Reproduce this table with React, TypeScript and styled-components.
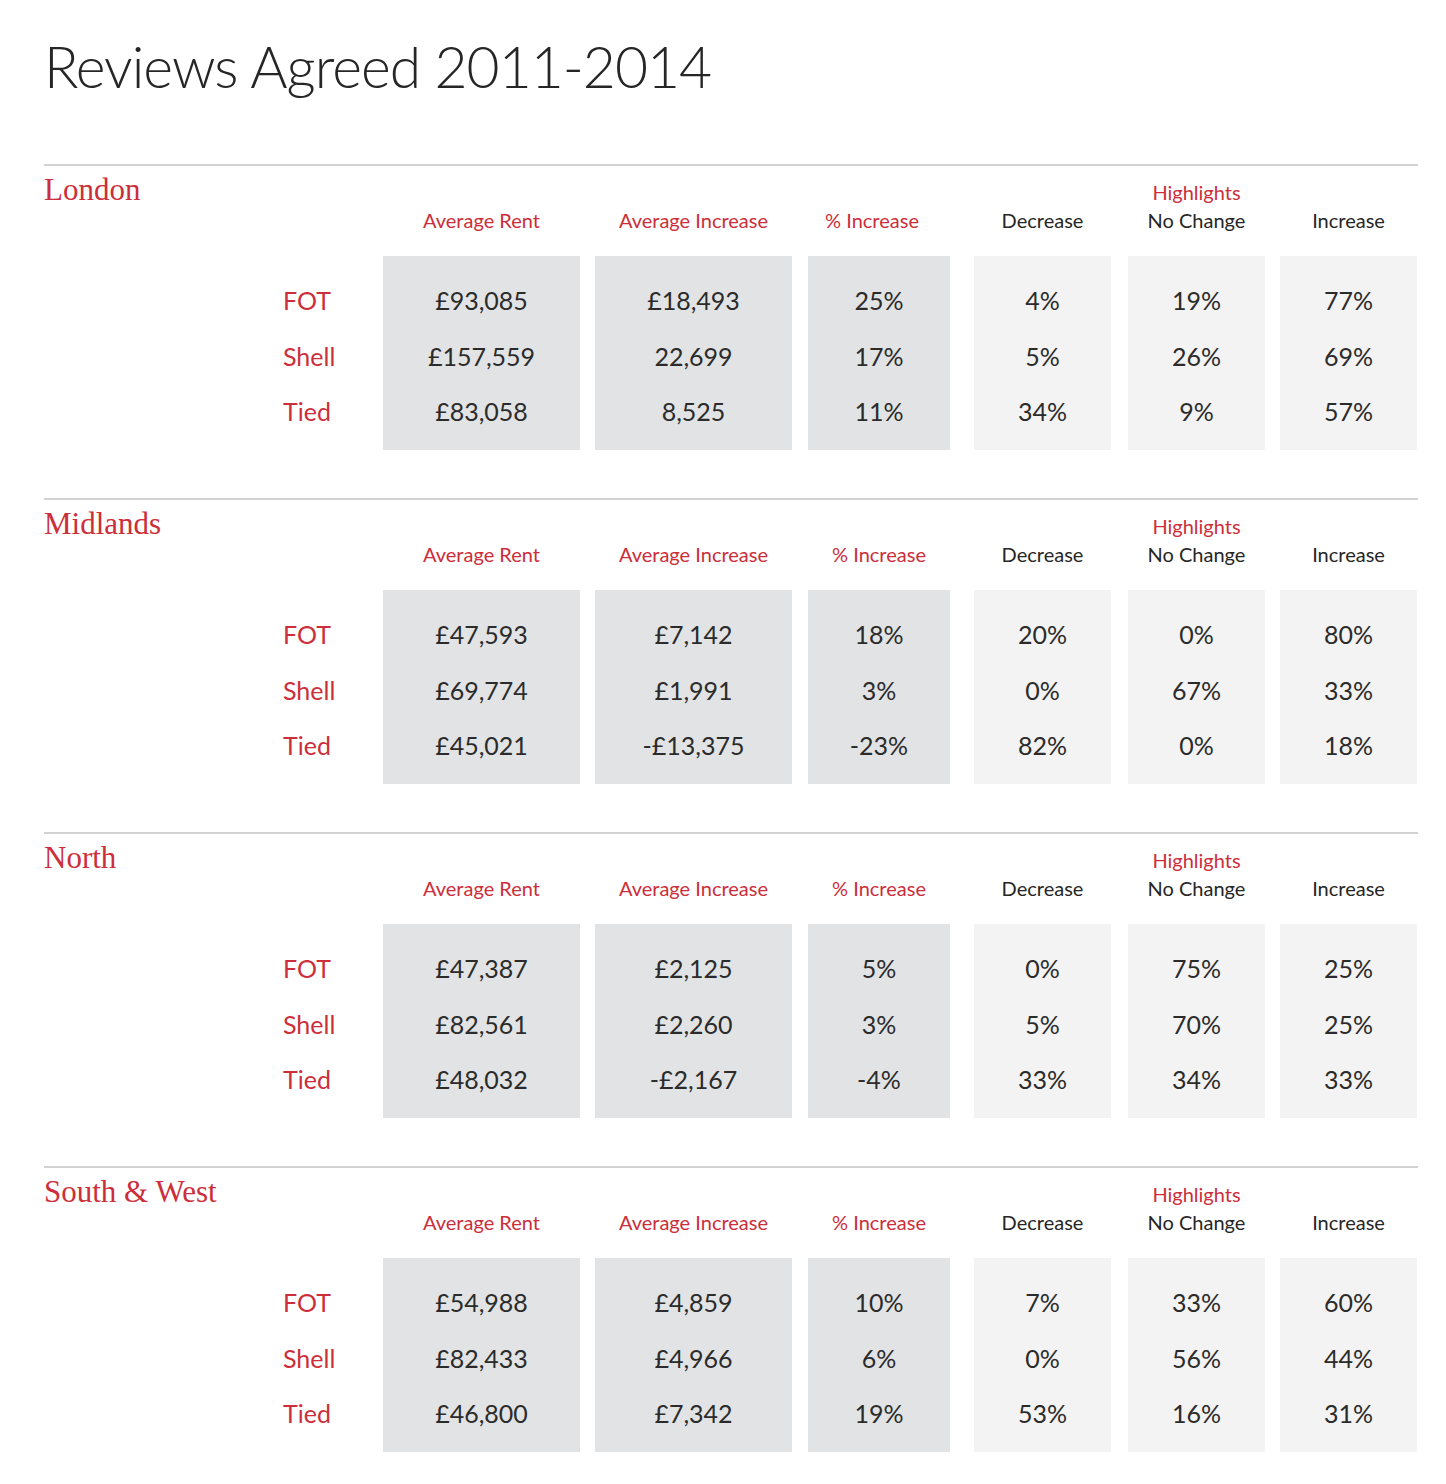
import React from "react";
import styled, { createGlobalStyle } from "styled-components";

const Global = createGlobalStyle`
  html, body { margin: 0; padding: 0; background: #fff; }
  body { font-family: Lato, "Open Sans", sans-serif; color: #2b2b2b; }
`;

const RED = "#cc2e3a";

const Page = styled.div`
  padding: 30px 28px 30px 44px;
  width: 1374px;
`;

const Title = styled.h1`
  margin: 0 0 62px 0;
  font-family: Lato, sans-serif;
  font-weight: 300;
  font-size: 57px;
  line-height: 72px;
  color: #262626;
  letter-spacing: -1px;
`;

const Section = styled.section`
  border-top: 2px solid #d2d2d2;
  display: flex;
  margin-bottom: 48px;
  &:last-child { margin-bottom: 0; }
`;

const LabelColumn = styled.div`
  width: 339px;
  flex: none;
  display: flex;
  flex-direction: column;
`;

const LabelHead = styled.div`
  height: 90px;
  padding-top: 6px;
  box-sizing: border-box;
`;

const RegionName = styled.h2`
  margin: 0;
  font-family: "Liberation Serif", "DejaVu Serif", serif;
  font-weight: 400;
  font-size: 31px;
  line-height: 36px;
  color: ${RED};
`;

const RowLabels = styled.div`
  padding: 17px 0 0 239px;
  height: 194px;
  box-sizing: border-box;
  display: flex;
  flex-direction: column;
`;

const RowLabel = styled.div`
  font-size: 25px;
  line-height: 55.5px;
  color: ${RED};
`;

const DataColumn = styled.div<{ $width: number; $gap: number }>`
  width: ${(p) => p.$width}px;
  margin-left: ${(p) => p.$gap}px;
  flex: none;
  display: flex;
  flex-direction: column;
`;

const Head = styled.div<{ $red: boolean; $dx: number }>`
  height: 90px;
  box-sizing: border-box;
  padding-bottom: 22px;
  display: flex;
  flex-direction: column;
  justify-content: flex-end;
  align-items: center;
  font-size: 20px;
  line-height: 28px;
  white-space: nowrap;
  color: ${(p) => (p.$red ? RED : "#262626")};
  transform: translateX(${(p) => p.$dx}px);
`;

const Highlight = styled.span`
  color: ${RED};
`;

const Cell = styled.div<{ $dark: boolean }>`
  height: 194px;
  box-sizing: border-box;
  padding-top: 17px;
  background: ${(p) => (p.$dark ? "#e2e3e5" : "#f3f3f3")};
  display: flex;
  flex-direction: column;
  align-items: center;
`;

const Value = styled.div`
  font-size: 25px;
  line-height: 55.5px;
  color: #2b2b2b;
  white-space: nowrap;
`;

type Col = { head: string; width: number; gap: number; red: boolean; dark: boolean; highlight?: boolean };

const cols: Col[] = [
  { head: "Average Rent", width: 197, gap: 0, red: true, dark: true },
  { head: "Average Increase", width: 197, gap: 15, red: true, dark: true },
  { head: "% Increase", width: 142, gap: 16, red: true, dark: true },
  { head: "Decrease", width: 137, gap: 24, red: false, dark: false },
  { head: "No Change", width: 137, gap: 17, red: false, dark: false, highlight: true },
  { head: "Increase", width: 137, gap: 15, red: false, dark: false },
];

type Region = { name: string; pctShift: number; rows: string[][] };

const regions: Region[] = [
  {
    name: "London",
    pctShift: -7,
    rows: [
      ["£93,085", "£18,493", "25%", "4%", "19%", "77%"],
      ["£157,559", "22,699", "17%", "5%", "26%", "69%"],
      ["£83,058", "8,525", "11%", "34%", "9%", "57%"],
    ],
  },
  {
    name: "Midlands",
    pctShift: 0,
    rows: [
      ["£47,593", "£7,142", "18%", "20%", "0%", "80%"],
      ["£69,774", "£1,991", "3%", "0%", "67%", "33%"],
      ["£45,021", "-£13,375", "-23%", "82%", "0%", "18%"],
    ],
  },
  {
    name: "North",
    pctShift: 0,
    rows: [
      ["£47,387", "£2,125", "5%", "0%", "75%", "25%"],
      ["£82,561", "£2,260", "3%", "5%", "70%", "25%"],
      ["£48,032", "-£2,167", "-4%", "33%", "34%", "33%"],
    ],
  },
  {
    name: "South & West",
    pctShift: 0,
    rows: [
      ["£54,988", "£4,859", "10%", "7%", "33%", "60%"],
      ["£82,433", "£4,966", "6%", "0%", "56%", "44%"],
      ["£46,800", "£7,342", "19%", "53%", "16%", "31%"],
    ],
  },
];

const rowNames = ["FOT", "Shell", "Tied"];

export default function App() {
  return (
    <>
      <Global />
      <Page>
        <Title>Reviews Agreed 2011-2014</Title>
        {regions.map((r) => (
          <Section key={r.name}>
            <LabelColumn>
              <LabelHead>
                <RegionName>{r.name}</RegionName>
              </LabelHead>
              <RowLabels>
                {rowNames.map((n) => (
                  <RowLabel key={n}>{n}</RowLabel>
                ))}
              </RowLabels>
            </LabelColumn>
            {cols.map((c, ci) => (
              <DataColumn key={c.head} $width={c.width} $gap={c.gap}>
                <Head $red={c.red} $dx={ci === 2 ? r.pctShift : 0}>
                  {c.highlight && <Highlight>Highlights</Highlight>}
                  <span>{c.head}</span>
                </Head>
                <Cell $dark={c.dark}>
                  {r.rows.map((row, ri) => (
                    <Value key={ri}>{row[ci]}</Value>
                  ))}
                </Cell>
              </DataColumn>
            ))}
          </Section>
        ))}
      </Page>
    </>
  );
}
